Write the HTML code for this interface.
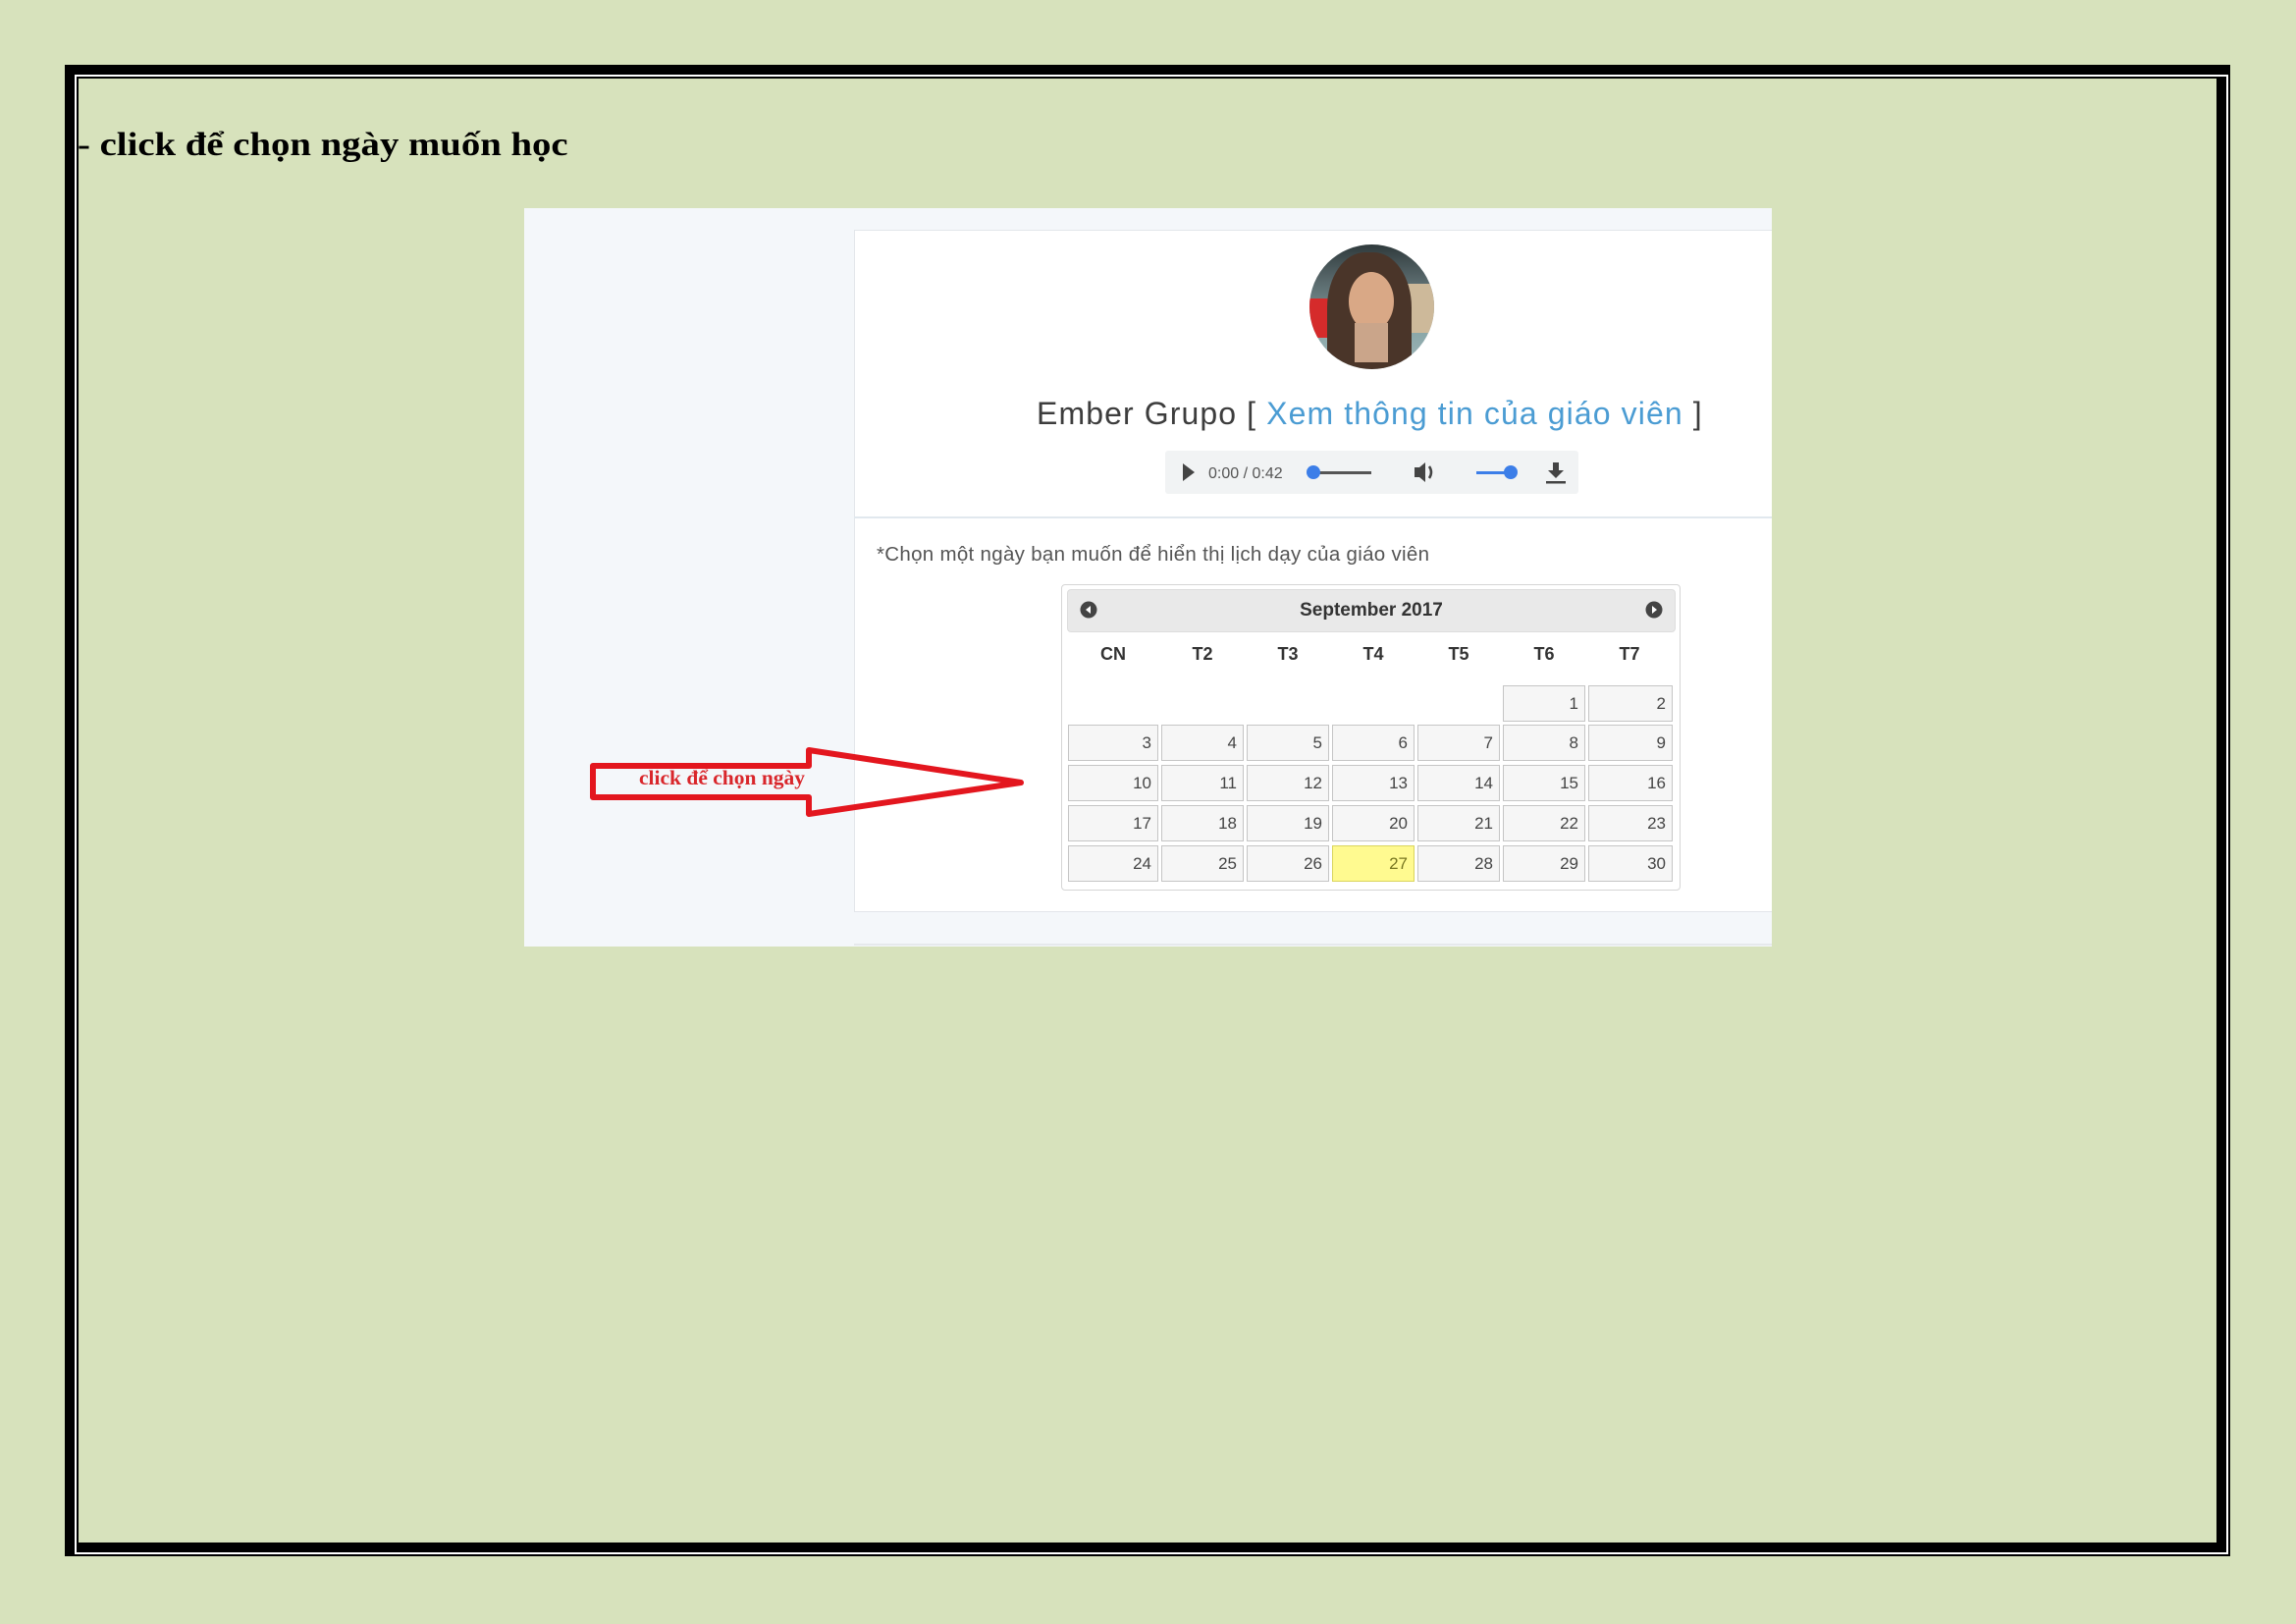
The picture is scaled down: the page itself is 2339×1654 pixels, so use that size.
<!DOCTYPE html>
<html><head><meta charset="utf-8">
<style>
*{margin:0;padding:0;box-sizing:border-box}
body{width:2339px;height:1654px;background:#d7e2bc;position:relative;overflow:hidden;font-family:"Liberation Sans",sans-serif}
.a{position:absolute}
.cell{position:absolute;height:37px;background:#f6f6f6;border:1px solid #c5c5c5;text-align:right;padding-right:6px;font-size:17px;line-height:35px;color:#454545}
.dn{position:absolute;top:656px;width:84px;text-align:center;font-weight:bold;font-size:18px;color:#333}
</style></head><body>
<div class="a" style="left:66px;top:66px;width:2206px;height:1519px;border-top:10px solid #000;border-left:10px solid #000;border-right:2px solid #000;border-bottom:2px solid #000"></div>
<div class="a" style="left:76px;top:76px;width:2194px;height:1507px;border:2px solid #fff"></div>
<div class="a" style="left:78px;top:78px;width:2190px;height:1503px;border-top:2px solid #000;border-left:2px solid #000;border-right:10px solid #000;border-bottom:10px solid #000"></div>

<div class="a" style="left:79px;top:129px;font-family:'Liberation Serif',serif;font-weight:bold;font-size:34px;color:#000;white-space:nowrap;transform:scaleX(1.14);transform-origin:left">- click để chọn ngày muốn học</div>

<div class="a" style="left:534px;top:212px;width:1271px;height:752px;background:#f4f7fa"></div>
<div class="a" style="left:870px;top:234px;width:935px;height:695px;background:#fff;border:1px solid #e3e6ea;border-right:none"></div>
<div class="a" style="left:870px;top:526px;width:935px;height:2px;background:#e1e8ee"></div>
<div class="a" style="left:870px;top:961px;width:935px;height:2px;background:#e6e9ec"></div>

<div class="a" style="left:1334px;top:249px;width:127px;height:127px;border-radius:50%;overflow:hidden;background:linear-gradient(180deg,#2f3a3c 0%,#5a6a6d 30%,#8aa7a8 70%,#9fb6ba 100%)">
 <div class="a" style="left:0;top:55px;width:30px;height:40px;background:#d52b2b"></div>
 <div class="a" style="left:95px;top:40px;width:32px;height:50px;background:#cdb99a"></div>
 <div class="a" style="left:18px;top:8px;width:86px;height:125px;border-radius:45% 45% 10% 10%;background:#4a3529"></div>
 <div class="a" style="left:40px;top:28px;width:46px;height:60px;border-radius:50%;background:#d9a886"></div>
 <div class="a" style="left:46px;top:80px;width:34px;height:40px;background:#caa58a"></div>
</div>

<div class="a" style="left:1056px;top:403px;font-size:32px;color:#3d3d3d;white-space:nowrap;letter-spacing:1.1px">Ember Grupo [ <span style="color:#4b9cd3">Xem thông tin của giáo viên</span> ]</div>

<div class="a" style="left:1187px;top:459px;width:421px;height:44px;background:#f1f3f4;border-radius:3px"></div>
<svg class="a" style="left:1187px;top:459px" width="421" height="44">
 <polygon points="18,13 18,31 30,22" fill="#444"/>
 <text x="44" y="28" font-family="Liberation Sans" font-size="16" fill="#555">0:00 / 0:42</text>
 <rect x="150" y="21" width="60" height="3" fill="#555"/>
 <circle cx="151" cy="22" r="7" fill="#3c7ee8"/>
 <polygon points="254,17 259,17 265,12 265,32 259,27 254,27" fill="#444"/>
 <path d="M269,16 Q273,22 269,28" stroke="#444" stroke-width="2.5" fill="none"/>
 <rect x="317" y="21" width="35" height="3" fill="#3c7ee8"/>
 <circle cx="352" cy="22" r="7" fill="#3c7ee8"/>
 <polygon points="395,12 401,12 401,20 406,20 398,28 390,20 395,20" fill="#444"/>
 <rect x="388" y="31" width="20" height="2.5" fill="#444"/>
</svg>

<div class="a" style="left:893px;top:553px;font-size:20.5px;color:#555;white-space:nowrap;letter-spacing:0.3px">*Chọn một ngày bạn muốn để hiển thị lịch dạy của giáo viên</div>

<div class="a" style="left:1081px;top:595px;width:631px;height:312px;border:1px solid #d5d5d5;border-radius:4px;background:#fff"></div>
<div class="a" style="left:1087px;top:600px;width:620px;height:44px;background:#e9e9e9;border:1px solid #ddd;border-radius:4px;text-align:center;font-weight:bold;font-size:19px;line-height:42px;color:#333">September 2017</div>
<svg class="a" style="left:1100px;top:612px" width="18" height="18"><circle cx="9" cy="9" r="8.5" fill="#444"/><polygon points="11,5 11,13 6,9" fill="#fff"/></svg>
<svg class="a" style="left:1676px;top:612px" width="18" height="18"><circle cx="9" cy="9" r="8.5" fill="#444"/><polygon points="7,5 7,13 12,9" fill="#fff"/></svg>

<div class="dn" style="left:1092px">CN</div>
<div class="dn" style="left:1183px">T2</div>
<div class="dn" style="left:1270px">T3</div>
<div class="dn" style="left:1357px">T4</div>
<div class="dn" style="left:1444px">T5</div>
<div class="dn" style="left:1531px">T6</div>
<div class="dn" style="left:1618px">T7</div>

<div class="cell" style="left:1531px;top:698px;width:84px">1</div>
<div class="cell" style="left:1618px;top:698px;width:86px">2</div>

<div class="cell" style="left:1088px;top:738px;width:92px">3</div>
<div class="cell" style="left:1183px;top:738px;width:84px">4</div>
<div class="cell" style="left:1270px;top:738px;width:84px">5</div>
<div class="cell" style="left:1357px;top:738px;width:84px">6</div>
<div class="cell" style="left:1444px;top:738px;width:84px">7</div>
<div class="cell" style="left:1531px;top:738px;width:84px">8</div>
<div class="cell" style="left:1618px;top:738px;width:86px">9</div>

<div class="cell" style="left:1088px;top:779px;width:92px">10</div>
<div class="cell" style="left:1183px;top:779px;width:84px">11</div>
<div class="cell" style="left:1270px;top:779px;width:84px">12</div>
<div class="cell" style="left:1357px;top:779px;width:84px">13</div>
<div class="cell" style="left:1444px;top:779px;width:84px">14</div>
<div class="cell" style="left:1531px;top:779px;width:84px">15</div>
<div class="cell" style="left:1618px;top:779px;width:86px">16</div>

<div class="cell" style="left:1088px;top:820px;width:92px">17</div>
<div class="cell" style="left:1183px;top:820px;width:84px">18</div>
<div class="cell" style="left:1270px;top:820px;width:84px">19</div>
<div class="cell" style="left:1357px;top:820px;width:84px">20</div>
<div class="cell" style="left:1444px;top:820px;width:84px">21</div>
<div class="cell" style="left:1531px;top:820px;width:84px">22</div>
<div class="cell" style="left:1618px;top:820px;width:86px">23</div>

<div class="cell" style="left:1088px;top:861px;width:92px">24</div>
<div class="cell" style="left:1183px;top:861px;width:84px">25</div>
<div class="cell" style="left:1270px;top:861px;width:84px">26</div>
<div class="cell" style="left:1357px;top:861px;width:84px;background:#fffa90;border-color:#dad55e;color:#777620">27</div>
<div class="cell" style="left:1444px;top:861px;width:84px">28</div>
<div class="cell" style="left:1531px;top:861px;width:84px">29</div>
<div class="cell" style="left:1618px;top:861px;width:86px">30</div>

<svg class="a" style="left:0;top:0" width="1100" height="900">
 <polygon points="604,780 824,780 824,764 1040,797 824,829 824,812 604,812" fill="none" stroke="#e3161e" stroke-width="6" stroke-linejoin="round"/>
</svg>
<div class="a" style="left:651px;top:780px;font-family:'Liberation Serif',serif;font-weight:bold;font-size:21.5px;color:#d9262b;white-space:nowrap">click để chọn ngày</div>
</body></html>
